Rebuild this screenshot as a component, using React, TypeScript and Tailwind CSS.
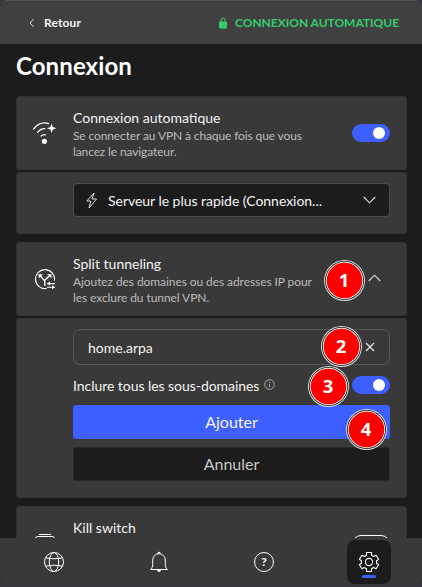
import React from 'react';

function Toggle() {
  return (
    <div className="flex h-[18px] w-[38px] items-center justify-end rounded-full bg-[#3e5fff] pr-[5px]">
      <div className="size-3 rounded-full bg-white" />
    </div>
  );
}

function Badge({ n, className }: { n: number; className: string }) {
  return (
    <div className={`absolute size-[41px] ${className}`}>
      <svg className="absolute inset-0" width="41" height="41" viewBox="0 0 41 41">
        <circle cx="20.5" cy="20.5" r="20.5" fill="#ddd" />
        <circle cx="20.5" cy="20.5" r="19.5" fill="#181818" />
        <circle cx="20.5" cy="20.5" r="18.7" fill="#eee" />
        <circle cx="20.5" cy="20.5" r="17.8" fill="#fe0000" />
      </svg>
      <div className="relative flex size-full items-center justify-center font-['Noto_Sans',sans-serif] text-[18.5px] leading-none font-bold text-white">
        {n}
      </div>
    </div>
  );
}

const card = 'w-[391px] rounded-[3px] border border-[#323232] bg-[#393939]';

function WifiIcon() {
  return (
    <svg width="26" height="26" viewBox="0 0 26 26" fill="none" stroke="#fff" strokeWidth="1.3" strokeLinecap="round">
      <path d="M1.6 9C6 3.6 11.2 1.8 16.6 3.6" />
      <path d="M5.6 12.4C7.7 9.7 10.2 8.4 12.8 8.6" />
      <path d="M9.2 16c1.3-1.2 2.8-1.6 4.2-1.1" />
      <circle cx="12.4" cy="21.3" r="2.6" fill="#fff" stroke="none" />
      <path d="M19.6 3.8l1.2 3.3 3.5 1.2-3.5 1.2-1.2 3.5-1.2-3.5-3.5-1.2 3.5-1.2z" fill="#fff" stroke="none" />
    </svg>
  );
}

function SplitIcon() {
  return (
    <svg width="22" height="22" viewBox="0 0 22 22" fill="none" stroke="#fff" strokeWidth="1.4">
      <path d="M12.6 19.5A9.5 9.5 0 1 1 20.4 11.6" strokeWidth="1.1" />
      <path d="M10.8 16.8v-3.6C10.8 10.6 8 9 6.2 6.8M10.8 11.8C10.8 10 13.5 9 15.6 6.8" />
      <path d="M4.4 5.2h4.5L5 9.2zM13 5.2h4.4v4z" fill="#fff" stroke="none" />
      <path d="M13 14.6h8M13 18.3h8" strokeWidth="1.1" />
      <path d="M16 12.6l-3 2 3 2zM18 16.3l3 2-3 2z" fill="#fff" stroke="none" />
    </svg>
  );
}

export default function App() {
  return (
    <div className="relative flex h-[587px] w-[422px] flex-col overflow-hidden bg-[#393742] font-[Lato,sans-serif] text-[#f4f4f4]">
      <div className="flex h-[586px] w-[422px] flex-col overflow-hidden rounded-[7px] bg-[#1c1c1c]">
        <header className="flex h-11 shrink-0 items-center border-t border-[#55535e] bg-[#404040] pl-[29px] text-[12px] font-bold">
          <svg width="6" height="10" viewBox="0 0 6 10" fill="none" stroke="#ddd"><path d="M4.7 1L1 5l3.7 4" /></svg>
          <span className="ml-[9px] w-[129px] tracking-[0.15px]">Retour</span>
          <svg className="ml-[46px]" width="8" height="12" viewBox="0 0 8 12"><rect y="4.5" width="8" height="7" rx="1" fill="#34cd70" /><path d="M2 5V3a2 2 0 0 1 4 0v2" fill="none" stroke="#34cd70" /></svg>
          <span className="ml-2 tracking-[-0.03px] whitespace-nowrap text-[#34cd70]">CONNEXION AUTOMATIQUE</span>
        </header>
        <main className="h-[494px] shrink-0 overflow-hidden px-4">
          <h1 className="h-[52px] pt-[6px] text-[24px] leading-8 font-bold tracking-[0.1px] text-white">Connexion</h1>

          <section className={`${card} flex h-[74px]`}>
            <div className="w-14 pt-[23px] pl-[15px]"><WifiIcon /></div>
            <div className="w-[250px] pt-[11px]">
              <div className="mb-px text-[14px] leading-[19px] whitespace-nowrap">Connexion automatique</div>
              <div className="text-[12px] leading-4 tracking-[-0.12px] whitespace-nowrap text-[#bcbcbc]">Se connecter au VPN à chaque fois que vous<br />lancez le navigateur.</div>
            </div>
            <div className="ml-[29px] pt-[27px]"><Toggle /></div>
          </section>
          <section className={`${card} mt-[2px] flex h-[62px] pt-[10px] pl-14`}>
            <div className="flex h-[34px] w-[317px] items-center rounded-[4px] border border-[#4b4b4b] bg-[#1c1c1c] pl-[11px]">
              <svg width="13" height="17" viewBox="0 0 13 17" fill="none" stroke="#ddd"><path d="M9.2 1L1.8 9h4L4 16l7.5-9H7z" strokeLinejoin="round" /></svg>
              <span className="ml-[10px] w-[220px] text-[14px] tracking-[-0.03px]">Serveur le plus rapide (Connexion...</span>
              <svg className="ml-[34.5px]" width="13" height="8" viewBox="0 0 13 8" fill="none" stroke="#ddd" strokeWidth="1.1"><path d="M.7 1l5.8 5.8L12.3 1" /></svg>
            </div>
          </section>

          <section className={`${card} mt-2 flex h-[74px]`}>
            <div className="w-14 pt-[26px] pl-[17px]"><SplitIcon /></div>
            <div className="w-[250px] pt-[11px]">
              <div className="mb-px text-[14px] leading-[19px]">Split tunneling</div>
              <div className="text-[12px] leading-4 tracking-[-0.08px] whitespace-nowrap text-[#bcbcbc]">Ajoutez des domaines ou des adresses IP pour<br />les exclure du tunnel VPN.</div>
            </div>
            <svg className="mt-[31px] ml-[44.5px]" width="13" height="8" viewBox="0 0 13 8" fill="none" stroke="#ddd" strokeWidth="1.1"><path d="M.7 7l5.8-5.8L12.3 7" /></svg>
          </section>
          <section className={`${card} mt-[2px] flex h-[180px] flex-col pt-[10px] pl-14`}>
            <div className="flex h-9 w-[317px] items-center rounded-[7px] border border-[#565656] pl-[14px] text-[14px]">
              <span className="w-[277px]">home.arpa</span>
              <svg width="10" height="10" viewBox="0 0 10 10" fill="none" stroke="#eee" strokeWidth="1.1"><path d="M1 1l8 8M9 1L1 9" /></svg>
            </div>
            <div className="flex h-10 w-[317px] items-center text-[14px]">
              <span className="tracking-[-0.05px] whitespace-nowrap">Inclure tous les sous-domaines</span>
              <svg className="mb-px ml-[5px]" width="11" height="11" viewBox="0 0 11 11" fill="none" stroke="#aaa"><circle cx="5.5" cy="5.5" r="4.8" /><path d="M5.5 4.7v3.3M5.5 2.8v1" /></svg>
              <div className="ml-auto"><Toggle /></div>
            </div>
            <div className="flex h-[34px] w-[317px] items-center justify-center rounded-[3px] bg-[#3e5fff] text-[16px]">Ajouter</div>
            <div className="mt-2 flex h-[34px] w-[317px] items-center justify-center rounded-[3px] border border-[#2b2b2b] bg-[#1c1c1c] text-[16px] text-[#c8c8c8]">Annuler</div>
          </section>
          <section className={`${card} mt-2 flex h-[74px]`}>
            <div className="w-14 pt-[26px] pl-[18px]">
              <svg width="20" height="5" viewBox="0 0 20 5" fill="none" stroke="#fff"><path d="M4 1.5h12M.5 5Q1 3.5 3 3.5h14q2 0 2.5 1.5" /></svg>
            </div>
            <div className="w-[250px] pt-[11px] text-[14px] leading-[19px]">Kill switch</div>
            <div className="mt-7 ml-[29px] h-[18px] w-[38px] rounded-full border border-white" />
          </section>
        </main>
        <nav className="flex h-12 shrink-0 items-center bg-[#393939] pl-[43px]">
          <svg width="22" height="22" viewBox="0 0 22 22" fill="none" stroke="#fff"><circle cx="11" cy="11" r="9.5" /><ellipse cx="11" cy="11" rx="4.7" ry="9.5" /><path d="M2.5 7Q11 8.6 19.5 7M2.5 15Q11 13.4 19.5 15" /></svg>
          <svg className="ml-[83px]" width="22" height="22" viewBox="0 0 22 22" fill="none" stroke="#fff"><path d="M2.5 18.5c1.5-1 2.2-3 2.2-5V9a6.3 6.3 0 0 1 12.6 0v4.5c0 2 .7 4 2.2 5zM10 2.5V1.4h2v1.1" /><path d="M9 19h4q-.5 2-2 2t-2-2z" fill="#fff" stroke="none" /></svg>
          <div className="ml-[84px] flex size-5 items-center justify-center rounded-full border border-white text-[12px] leading-none font-black">?</div>
          <div className="ml-[73px] flex h-11 w-11 flex-col items-center rounded-[8px] bg-[#1c1c1c] pt-[11px]">
            <svg width="22" height="22" viewBox="0 0 22 22" fill="none" stroke="#fff" strokeWidth="1.1" strokeLinejoin="round"><path d="M8.5 1.5h5v2.8l2.2 1.2 2.4-1.3 2.5 4.1-2 1.4v2.6l2 1.4-2.5 4.1-2.4-1.3-2.2 1.2v2.8h-5v-2.8l-2.2-1.2-2.4 1.3-2.5-4.1 2-1.4V9.7l-2-1.4 2.5-4.1 2.4 1.3 2.2-1.2z" /><circle cx="11" cy="11" r="3.6" /></svg>
            <div className="mt-[2px] h-[3px] w-[14px] shrink-0 rounded-full bg-[#3e5fff]" />
          </div>
        </nav>
      </div>
      <Badge n={1} className="top-[259.5px] left-[323.5px]" />
      <Badge n={2} className="top-[325.5px] left-[320.5px]" />
      <Badge n={3} className="top-[365.5px] left-[307.5px]" />
      <Badge n={4} className="top-[408.5px] left-[345.5px]" />
    </div>
  );
}
